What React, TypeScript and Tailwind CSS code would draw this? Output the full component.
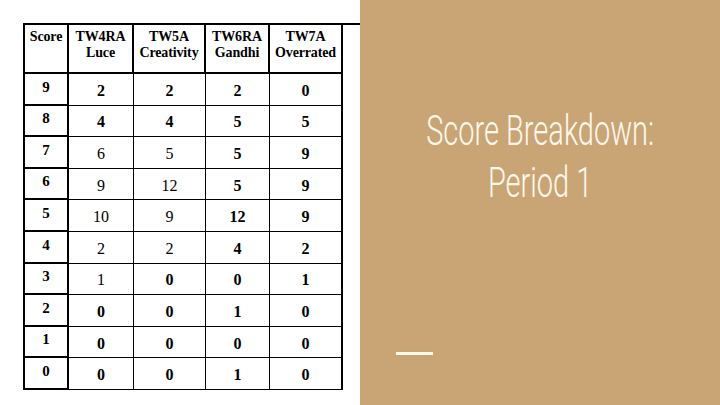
import React from "react";

const headers = [
  ["Score"],
  ["TW4RA", "Luce"],
  ["TW5A", "Creativity"],
  ["TW6RA", "Gandhi"],
  ["TW7A", "Overrated"],
];

// light = which data cells render in normal weight
const rows: { score: number; vals: number[]; light: number[] }[] = [
  { score: 9, vals: [2, 2, 2, 0], light: [] },
  { score: 8, vals: [4, 4, 5, 5], light: [] },
  { score: 7, vals: [6, 5, 5, 9], light: [0, 1] },
  { score: 6, vals: [9, 12, 5, 9], light: [0, 1] },
  { score: 5, vals: [10, 9, 12, 9], light: [0, 1] },
  { score: 4, vals: [2, 2, 4, 2], light: [0, 1] },
  { score: 3, vals: [1, 0, 0, 1], light: [0] },
  { score: 2, vals: [0, 0, 1, 0], light: [] },
  { score: 1, vals: [0, 0, 0, 0], light: [] },
  { score: 0, vals: [0, 0, 1, 0], light: [] },
];

const serif = { fontFamily: '"Liberation Serif", "Times New Roman", serif' };

const ScoreTable = () => {
  return (
    <div
      className="grid grid-cols-[44px_65px_72px_64px_73px] border-l-2 border-t-2 border-black text-black"
      style={serif}
    >
      {headers.map((h, i) => (
        <div
          key={i}
          className="h-[49px] flex flex-col items-center pt-[4px] border-r-2 border-b-2 border-black text-[14px] leading-[16px] font-bold tracking-[-0.01em]"
        >
          {h.map((line) => (
            <span key={line}>{line}</span>
          ))}
        </div>
      ))}
      {rows.map((r) => (
        <React.Fragment key={r.score}>
          <div className="h-[31.6px] flex items-center justify-center pb-[4px] border-r-2 border-b-2 border-black text-[15px] font-bold">
            {r.score}
          </div>
          {r.vals.map((v, j) => (
            <div
              key={j}
              className={
                "h-[31.6px] flex items-center justify-center pt-[3px] border-b border-black text-[16px] " +
                (j === 3 ? "border-r-2 " : "border-r ") +
                (r.light.includes(j) ? "font-normal" : "font-bold")
              }
            >
              {v}
            </div>
          ))}
        </React.Fragment>
      ))}
    </div>
  );
}

export default function App() {
  return (
    <div className="w-[720px] h-[405px] flex overflow-hidden bg-white">
      <div className="w-[360px] h-full pl-[23px] pt-[23px]">
        <ScoreTable />
      </div>
      <div className="w-[360px] h-full bg-[#c9a575] flex flex-col">
        <div className="flex-1 flex flex-col items-center pt-[105px]">
          <div
            className="text-[#fdf8ee] text-[42px] leading-[52px] font-light text-center scale-x-[0.69] whitespace-nowrap"
            style={{ fontFamily: 'Roboto, "DejaVu Sans", sans-serif' }}
          >
            <div>Score Breakdown:</div>
            <div>Period 1</div>
          </div>
        </div>
        <div className="pl-[36px] pb-[50px]">
          <div className="w-[37px] h-[3px] bg-[#fdf8ee]" />
        </div>
      </div>
    </div>
  );
}
